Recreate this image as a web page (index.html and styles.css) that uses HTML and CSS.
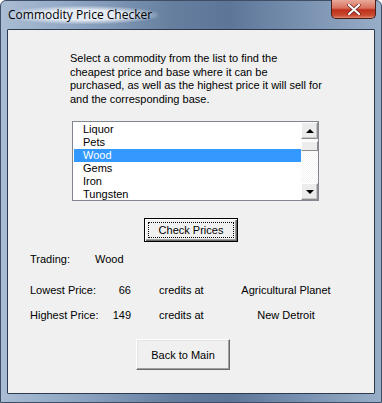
FILE: index.html
```html
<!DOCTYPE html>
<html lang="en">
<head>
    <meta charset="UTF-8">
    <title>Commodity Price Checker</title>
    <link rel="stylesheet" href="styles.css">
</head>
<body>

    <div class="window">
        <!-- Title bar -->
        <div class="titlebar">
            <span class="title">Commodity Price Checker</span>
            <div class="close-btn">
                <svg width="14" height="11" viewBox="0 0 14 11">
                    <path d="M2 1 L12 10 M12 1 L2 10" stroke="#5a1a14" stroke-width="3.4" stroke-linecap="round"/>
                    <path d="M2 1 L12 10 M12 1 L2 10" stroke="#ffffff" stroke-width="2.2" stroke-linecap="round"/>
                </svg>
            </div>
        </div>

        <!-- Client area -->
        <div class="client">
            <p class="intro">Select a commodity from the list to find the cheapest price and base where it can be purchased, as well as the highest price it will sell for and the corresponding base.</p>

            <div class="listbox">
                <ul class="items">
                    <li>Liquor</li>
                    <li>Pets</li>
                    <li class="selected">Wood</li>
                    <li>Gems</li>
                    <li>Iron</li>
                    <li>Tungsten</li>
                </ul>
                <div class="scrollbar">
                    <div class="arrow up"><span></span></div>
                    <div class="thumb"></div>
                    <div class="track"></div>
                    <div class="arrow down"><span></span></div>
                </div>
            </div>

            <div class="btn-row check-row">
                <button class="btn focused"><span>Check Prices</span></button>
            </div>

            <div class="trading">
                <span class="lbl">Trading:</span>
                <span>Wood</span>
            </div>

            <div class="prices">
                <span class="lbl">Lowest Price:</span>
                <span class="num">66</span>
                <span class="credits">credits at</span>
                <span class="base">Agricultural Planet</span>

                <span class="lbl">Highest Price:</span>
                <span class="num">149</span>
                <span class="credits">credits at</span>
                <span class="base">New Detroit</span>
            </div>

            <div class="btn-row back-row">
                <button class="btn back"><span>Back to Main</span></button>
            </div>
        </div>
    </div>

</body>
</html>
```

FILE: styles.css
```css
/* General */
body {
    margin: 0;
    padding: 0;
    font-family: 'Liberation Sans', 'DejaVu Sans', sans-serif;
    font-size: 11px;
    color: #000;
    background: #fff;
}

/* Window frame (Aero style) */
.window {
    width: 382px;
    height: 403px;
    box-sizing: border-box;
    padding: 0 6px 8px 6px;
    background: linear-gradient(90deg, #a9bdd3 0%, #8ea5c2 20%, #667f9f 45%, #5d7698 60%, #7a92b1 80%, #98adc7 100%);
    border: 1px solid #3d4e66;
    border-radius: 6px 6px 0 0;
    display: flex;
    flex-direction: column;
}

.titlebar {
    height: 28px;
    display: flex;
    align-items: flex-start;
    position: relative;
}

.title {
    margin-top: 5px;
    margin-left: 1px;
    font-family: 'Open Sans', 'Liberation Sans', sans-serif;
    font-size: 12px;
    color: #000;
    padding: 0 6px 0 0;
    background: radial-gradient(ellipse at center, rgba(240, 244, 250, 0.9) 40%, rgba(240, 244, 250, 0) 75%);
    line-height: 18px;
}

.close-btn {
    position: absolute;
    top: -1px;
    right: -1px;
    width: 45px;
    height: 19px;
    border: 1px solid #4a1f1a;
    border-top: none;
    border-radius: 0 0 5px 5px;
    background: linear-gradient(180deg, #e9a99a 0%, #d8705c 45%, #c0301c 55%, #c84a30 85%, #e08a6c 100%);
    display: flex;
    align-items: center;
    justify-content: center;
    box-sizing: border-box;
}

.client {
    flex: 1;
    background-color: #f0f0f0;
    border: 1px solid #2d3a4d;
    border-radius: 1px;
    position: relative;
}

/* Intro text */
.intro {
    margin: 22px 0 0 62px;
    width: 252px;
    line-height: 13.5px;
}

/* List box */
.listbox {
    margin: 15px 0 0 64px;
    width: 247px;
    height: 80px;
    box-sizing: border-box;
    border: 1px solid #828790;
    background: #fff;
    display: flex;
}

.items {
    list-style: none;
    margin: 0;
    padding: 1px 0 0 1px;
    flex: 1;
}

.items li {
    height: 13px;
    line-height: 13px;
    padding-left: 9px;
}

.items li.selected {
    background-color: #3399ff;
    color: #fff;
}

.scrollbar {
    width: 17px;
    display: flex;
    flex-direction: column;
    background: repeating-conic-gradient(#f4f4f4 0 25%, #ffffff 0 50%) 0 0 / 2px 2px;
}

.arrow {
    height: 17px;
    box-sizing: border-box;
    background: #ececec;
    border: 1px solid #8d8d8d;
    border-top-color: #fff;
    border-left-color: #fff;
    box-shadow: inset -1px -1px 0 #c7c7c7;
    display: flex;
    align-items: center;
    justify-content: center;
}

.arrow span {
    width: 0;
    height: 0;
    border-left: 4px solid transparent;
    border-right: 4px solid transparent;
}

.arrow.up span {
    border-bottom: 4px solid #000;
}

.arrow.down span {
    border-top: 4px solid #000;
}

.thumb {
    height: 10px;
    margin-top: 2px;
    box-sizing: border-box;
    background: #ececec;
    border: 1px solid #8d8d8d;
    border-top-color: #fff;
    border-left-color: #fff;
}

.track {
    flex: 1;
}

/* Buttons */
.btn-row {
    display: flex;
}

.check-row {
    margin: 17px 0 0 136px;
}

.back-row {
    margin: 17px 0 0 128px;
}

.btn {
    font-family: inherit;
    font-size: 11px;
    color: #000;
    background: #f0f0f0;
    border: 1px solid #fff;
    border-right-color: #6a6a6a;
    border-bottom-color: #6a6a6a;
    box-shadow: inset -1px -1px 0 #a0a0a0, inset 1px 1px 0 #e3e3e3;
    padding: 2px;
    width: 94px;
    height: 24px;
    box-sizing: border-box;
}

.btn.focused {
    border: 1px solid #000;
    box-shadow: inset 1px 1px 0 #fff, inset -1px -1px 0 #6a6a6a, inset -2px -2px 0 #a0a0a0;
    padding: 3px;
}

.btn.focused span {
    display: block;
    height: 100%;
    box-sizing: border-box;
    border: 1px dotted #000;
    line-height: 14px;
}

.btn.back {
    height: 31px;
}

/* Results */
.trading {
    margin: 11px 0 0 22px;
    display: flex;
    height: 13px;
    line-height: 13px;
}

.trading .lbl {
    width: 65px;
}

.prices {
    margin: 18px 0 0 22px;
    display: grid;
    grid-template-columns: 70px 31px 28px 77px 100px;
    row-gap: 12px;
    line-height: 13px;
}

.prices .num {
    text-align: right;
}

.prices .credits {
    grid-column: 4;
}

.prices .lbl {
    grid-column: 1;
}

.prices .base {
    text-align: center;
    white-space: nowrap;
}
```
